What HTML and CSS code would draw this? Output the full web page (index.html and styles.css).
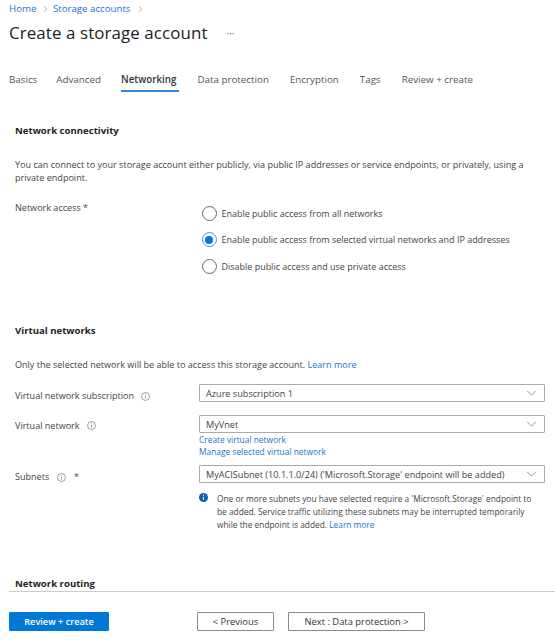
FILE: index.html
```html
<!DOCTYPE html>
<html lang="en">
<head>
<meta charset="utf-8">
<title>Create a storage account</title>
<link rel="stylesheet" href="styles.css">
</head>
<body>
<div class="page">
  <nav class="crumbs">
    <a>Home</a>
    <svg class="crumb-sep" viewBox="0 0 6 10"><path d="M1 1l4 4-4 4"/></svg>
    <a>Storage accounts</a>
    <svg class="crumb-sep" viewBox="0 0 6 10"><path d="M1 1l4 4-4 4"/></svg>
  </nav>
  <header class="title-row">
    <h1>Create a storage account</h1>
    <span class="more">···</span>
  </header>
  <div class="tabs">
    <span class="tab">Basics</span>
    <span class="tab">Advanced</span>
    <span class="tab active">Networking</span>
    <span class="tab">Data protection</span>
    <span class="tab">Encryption</span>
    <span class="tab">Tags</span>
    <span class="tab">Review + create</span>
  </div>

  <section class="connectivity">
    <h2>Network connectivity</h2>
    <p class="intro">You can connect to your storage account either publicly, via public IP addresses or service endpoints, or privately, using a private endpoint.</p>
    <div class="access">
      <div class="label">Network access *</div>
      <div class="radios">
        <div class="radio-row"><span class="radio"></span>Enable public access from all networks</div>
        <div class="radio-row"><span class="radio on"></span>Enable public access from selected virtual networks and IP addresses</div>
        <div class="radio-row"><span class="radio"></span>Disable public access and use private access</div>
      </div>
    </div>
  </section>

  <section class="vnets">
    <h2>Virtual networks</h2>
    <p class="only">Only the selected network will be able to access this storage account. <a>Learn more</a></p>
    <div class="form-row">
      <div class="label">Virtual network subscription <svg class="info" viewBox="0 0 10 10"><circle cx="5" cy="5" r="4.4"/><path d="M5 4.4v3M5 2.4v1"/></svg></div>
      <div class="field">
        <div class="select">Azure subscription 1<svg class="chev" viewBox="0 0 12 7"><path d="M1 1l5 5 5-5"/></svg></div>
      </div>
    </div>
    <div class="form-row vnet">
      <div class="label">Virtual network <svg class="info" viewBox="0 0 10 10"><circle cx="5" cy="5" r="4.4"/><path d="M5 4.4v3M5 2.4v1"/></svg></div>
      <div class="field">
        <div class="select">MyVnet<svg class="chev" viewBox="0 0 12 7"><path d="M1 1l5 5 5-5"/></svg></div>
        <a class="field-link first">Create virtual network</a>
        <a class="field-link">Manage selected virtual network</a>
      </div>
    </div>
    <div class="form-row subnets">
      <div class="label">Subnets <svg class="info" viewBox="0 0 10 10"><circle cx="5" cy="5" r="4.4"/><path d="M5 4.4v3M5 2.4v1"/></svg> <span class="req">*</span></div>
      <div class="field">
        <div class="select">MyACISubnet (10.1.1.0/24) ('Microsoft.Storage' endpoint will be added)<svg class="chev" viewBox="0 0 12 7"><path d="M1 1l5 5 5-5"/></svg></div>
        <div class="notice">
          <svg class="notice-icon" viewBox="0 0 10 10"><circle cx="5" cy="5" r="5"/><path d="M5 4.3v3.4M5 2v1.2"/></svg>
          <p>One or more subnets you have selected require a 'Microsoft.Storage' endpoint to be added. Service traffic utilizing these subnets may be interrupted temporarily while the endpoint is added. <a>Learn more</a></p>
        </div>
      </div>
    </div>
  </section>

  <h2 class="routing">Network routing</h2>
  <footer class="actions">
    <button class="btn primary">Review + create</button>
    <button class="btn prev">&lt; Previous</button>
    <button class="btn next">Next : Data protection &gt;</button>
  </footer>
</div>
</body>
</html>
```
FILE: styles.css
```css
* { box-sizing: border-box; }
html, body { margin: 0; background: #fff; }
body {
  width: 555px;
  height: 641px;
  overflow: hidden;
  font-family: "Open Sans", "Noto Sans", sans-serif;
  font-size: 9.05px;
  line-height: 13px;
  color: #444;
}
a { color: #1a73c8; }
.page { display: flex; flex-direction: column; padding-left: 9px; }

.crumbs { display: flex; align-items: center; height: 13px; margin-top: 2px; font-size: 9.7px; }
.crumb-sep { width: 4.5px; height: 8px; margin: 0 5px 0 7px; fill: none; stroke: #999; stroke-width: 1; }

.title-row { display: flex; align-items: center; height: 24px; margin-top: 6px; }
h1 { margin: 0; font-size: 16.9px; font-weight: 500; line-height: 24px; color: #222; letter-spacing: .1px; }
.more { margin-left: 19px; font-size: 10px; color: #666; }

.tabs { display: flex; height: 26px; margin-top: 25px; }
.tab { margin-right: 21px; font-size: 9.8px; line-height: 20px; color: #555; white-space: nowrap; }
.tab:first-child { margin-right: 19px; }
.tab:nth-child(2) { margin-right: 20px; }
.tab.active { height: 22px; padding-right: 3px; border-bottom: 2px solid #2b88d8; color: #333; font-weight: 600; margin-right: 18px; }

h2 { margin: 0; font-size: 9.6px; font-weight: 700; line-height: 13px; color: #222; }
.connectivity { margin-top: 28px; padding-left: 6px; }
.intro { margin: 21px 0 0; width: 530px; color: #444; }
.access { display: flex; margin-top: 17px; }
.access .label { width: 186.5px; }
.radios { display: flex; flex-direction: column; gap: 12.5px; padding-top: 5px; font-size: 8.98px; }
.radio-row { display: flex; align-items: center; height: 14px; color: #444; }
.radio {
  width: 15px; height: 15px; margin-right: 5px; border: 1px solid #666; border-radius: 50%; background: #fff;
  flex: none;
}
.radio.on { border-color: #3f97e0; position: relative; }
.radio.on::after {
  content: ""; position: absolute; left: 2.5px; top: 2.5px; width: 8px; height: 8px; border-radius: 50%; background: #0078d4;
}

.vnets { margin-top: 51px; padding-left: 6px; }
.only { margin: 21px 0 0; }
.form-row { display: flex; }
.form-row + .form-row { margin-top: 13px; }
.only + .form-row { margin-top: 13px; }
.form-row .label { width: 184px; padding-top: 5px; white-space: nowrap; }
.form-row.vnet .label { padding-top: 3.5px; }
.form-row.subnets { margin-top: 7px; }
.field { width: 346px; }
.select {
  display: flex; align-items: center; justify-content: space-between;
  height: 18px; padding: 0 7px 0 6px; border: 1px solid #aaa; border-radius: 1px; background: #fff; color: #444; font-size: 9.15px; white-space: nowrap;
}
.chev { width: 11px; height: 6px; fill: none; stroke: #777; stroke-width: .9; flex: none; }
.info { width: 9px; height: 9px; margin-left: 5px; vertical-align: -1.5px; fill: none; stroke: #666; stroke-width: .7; }
.req { margin-left: 6px; }
.field-link { display: block; font-size: 8.4px; line-height: 12px; }
.field-link.first { margin-top: 1px; }
.notice { display: flex; margin-top: 9px; }
.notice-icon { width: 9px; height: 9px; margin-top: 1px; margin-right: 9px; flex: none; }
.notice-icon circle { fill: #0f5fb3; }
.notice-icon path { stroke: #fff; stroke-width: 1.1; fill: none; }
.notice p { margin: 0; width: 320px; font-size: 8.35px; }

.routing { margin-top: 46px; padding-left: 6px; }
.actions { display: flex; margin-top: 1px; padding-top: 20px; border-top: 1px solid #ccc; }
.btn {
  height: 19px; padding: 0; font-family: inherit; font-size: 9.4px; line-height: 17px; border-radius: 1px; white-space: nowrap;
  background: #fff; border: 1px solid #8a8a8a; color: #333;
}
.btn.primary { width: 100px; font-size: 9.2px; background: #0078d4; border-color: #0078d4; color: #fff; font-weight: 600; }
.btn.prev { width: 77px; margin-left: 88px; }
.btn.next { width: 137px; margin-left: 14px; }
```
